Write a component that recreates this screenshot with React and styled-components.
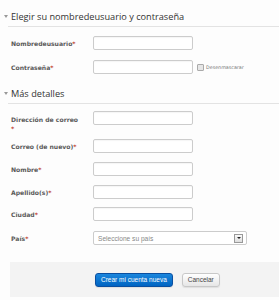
import React from "react";
import styled, { createGlobalStyle } from "styled-components";

const Global = createGlobalStyle`
  html, body { margin: 0; padding: 0; background: #fdfdfd; }
  body { font-family: "Open Sans", "DejaVu Sans", sans-serif; color: #333; }
`;

const Page = styled.div`
  width: 279px;
  height: 300px;
  overflow: hidden;
  padding-top: 10px;
  box-sizing: border-box;
`;

const Fieldset = styled.section`
  margin: 0;
`;

const Legend = styled.div`
  display: flex;
  align-items: center;
  margin-left: 8px;
  padding: 0 0 3px 0;
  border-bottom: 1px solid #e3e3e3;
  font-size: 9.2px;
  line-height: 13px;
  color: #333;
  height: 13px;
`;

const Arrow = styled.span`
  width: 0;
  height: 0;
  margin-left: -4px;
  margin-right: 3px;
  border-left: 2px solid transparent;
  border-right: 2px solid transparent;
  border-top: 3px solid #999;
`;

const Rows = styled.div`
  display: flex;
  flex-direction: column;
  padding-top: ${(p) => p.$top}px;
`;

const Row = styled.div`
  display: flex;
  align-items: ${(p) => (p.$top ? "flex-start" : "center")};
  height: 14px;
  margin-bottom: ${(p) => p.$gap}px;
`;

const Label = styled.div`
  width: 82px;
  padding-left: 11px;
  font-family: "DejaVu Sans", Verdana, sans-serif;
  font-weight: bold;
  font-size: 6.1px;
  line-height: 9px;
  color: #5a5a5a;
  ${(p) => p.$top && "padding-top: 4px;"}
`;

const Req = styled.span`
  color: #c0392b;
`;

const Input = styled.div`
  width: 98px;
  height: 12px;
  border: 1px solid #ccc;
  border-radius: 2px;
  background: #fff;
  box-shadow: inset 0 1px 1px rgba(0, 0, 0, 0.04);
`;

const Unmask = styled.label`
  display: flex;
  align-items: center;
  margin-left: 4px;
  font-family: "DejaVu Sans", Verdana, sans-serif;
  font-size: 4.8px;
  color: #777;
  gap: 2px;
`;

const Box = styled.span`
  width: 5px;
  height: 5px;
  border: 1px solid #aaa;
  background: #e6e6e6;
  border-radius: 1px;
`;

const Select = styled.div`
  width: 145px;
  height: 12px;
  border: 1px solid #ccc;
  border-radius: 2px;
  background: #fff;
  display: flex;
  align-items: center;
  justify-content: space-between;
  padding: 0 3px 0 4px;
  font-family: "Liberation Sans", Arial, sans-serif;
  font-size: 6.6px;
  color: #888;
`;

const SelBtn = styled.span`
  width: 7px;
  height: 7px;
  border: 1px solid #999;
  background: linear-gradient(#fafafa, #ddd);
  display: flex;
  align-items: center;
  justify-content: center;
  &::after {
    content: "";
    border-left: 2px solid transparent;
    border-right: 2px solid transparent;
    border-top: 2px solid #222;
  }
`;

const Footer = styled.div`
  margin: 17px 0 0 10px;
  height: 35px;
  background: #f3f3f3;
  display: flex;
  align-items: center;
  padding-left: 85px;
  gap: 9px;
`;

const Button = styled.button`
  height: 14px;
  padding: 0 5px;
  border-radius: 3px;
  font-family: "Liberation Sans", Arial, sans-serif;
  font-size: 6.5px;
  line-height: 12px;
  border: 1px solid ${(p) => (p.$primary ? "#0a4fa0" : "#c8c8c8")};
  color: ${(p) => (p.$primary ? "#fff" : "#444")};
  background: ${(p) =>
    p.$primary
      ? "linear-gradient(#1a86dd, #0064c2)"
      : "linear-gradient(#fff, #e6e6e6)"};
  box-shadow: 0 1px 1px rgba(0, 0, 0, 0.08);
`;

const Field = ({ label, gap = 9, children, wrap }) => (
  <Row $gap={gap} $top={wrap}>
    <Label $top={wrap}>
      {label}
      {wrap ? <br /> : null}
      <Req>*</Req>
    </Label>
    {children}
  </Row>
);

export default function App() {
  return (
    <Page>
      <Global />
      <Fieldset>
        <Legend>
          <Arrow />
          Elegir su nombredeusuario y contraseña
        </Legend>
        <Rows $top={9}>
          <Field label="Nombredeusuario" gap={10}>
            <Input />
          </Field>
          <Field label="Contraseña" gap={13}>
            <Input />
            <Unmask>
              <Box />
              Desenmascarar
            </Unmask>
          </Field>
        </Rows>
      </Fieldset>
      <Fieldset>
        <Legend>
          <Arrow />
          Más detalles
        </Legend>
        <Rows $top={7}>
          <Field label="Dirección de correo" wrap gap={14}>
            <Input />
          </Field>
          <Field label="Correo (de nuevo)" gap={9}>
            <Input />
          </Field>
          <Field label="Nombre" gap={9}>
            <Input />
          </Field>
          <Field label="Apellido(s)" gap={8}>
            <Input />
          </Field>
          <Field label="Ciudad" gap={10}>
            <Input />
          </Field>
          <Field label="País" gap={0}>
            <Select>
              Seleccione su país
              <SelBtn />
            </Select>
          </Field>
        </Rows>
      </Fieldset>
      <Footer>
        <Button $primary>Crear mi cuenta nueva</Button>
        <Button>Cancelar</Button>
      </Footer>
    </Page>
  );
}
